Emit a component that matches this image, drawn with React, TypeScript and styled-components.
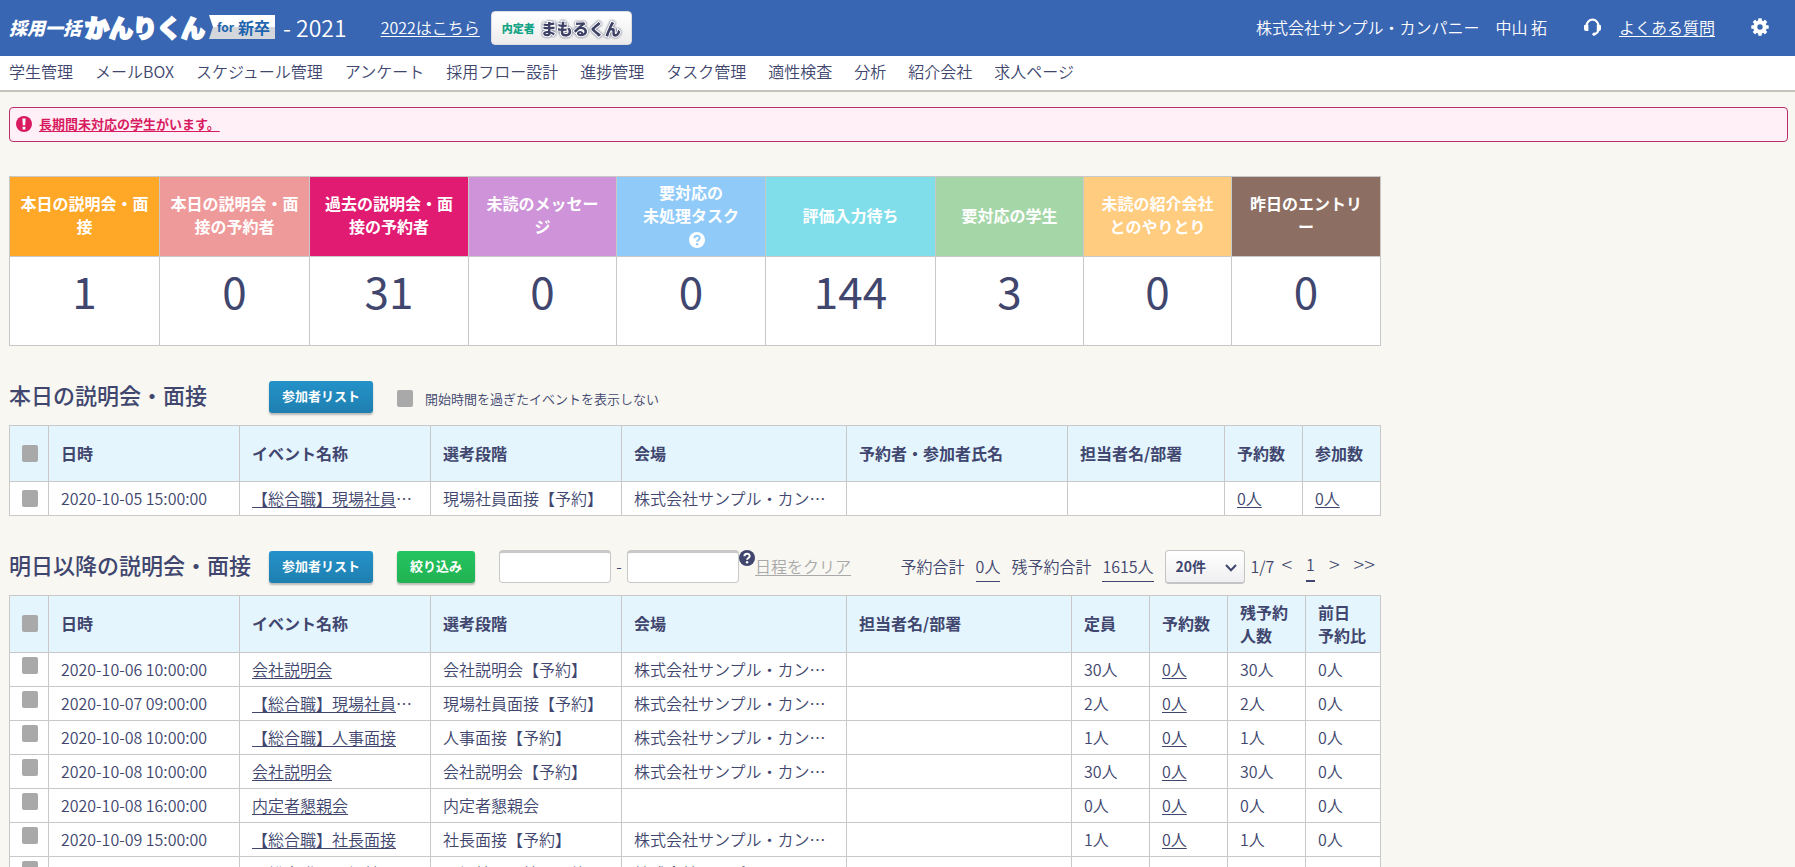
import React from "react";
import styled, { createGlobalStyle } from "styled-components";

const ink = "#40466e";
const line = "#c8c8c8";

const GlobalStyle = createGlobalStyle`
  * { box-sizing: border-box; }
  body {
    margin: 0;
    background: #f8f7f2;
    color: ${ink};
    font-family: "Noto Sans CJK JP", sans-serif;
    font-size: 16px;
    font-weight: 350;
    line-height: 23px;
  }
  a { color: inherit; text-underline-offset: 2px; }
  button, input, select { font-family: inherit; color: inherit; }
`;

const Header = styled.header`
  display: flex;
  align-items: center;
  height: 56px;
  padding: 0 26px 2px 9px;
  background: #3966b3;
  color: #fff;
  white-space: nowrap;
`;
const Logo = styled.div`
  display: flex;
  align-items: center;
  font-weight: 900;
  line-height: 24px;
`;
const LogoSmall = styled.span`
  font-size: 18px;
  font-style: italic;
`;
const LogoLarge = styled.span`
  margin-left: 4px;
  font-size: 24px;
  -webkit-text-stroke: 2px #fff;
`;
const LogoBadge = styled.span`
  display: flex;
  align-items: center;
  gap: 4px;
  height: 24px;
  margin-left: 4px;
  padding: 0 5px 0 8px;
  background: linear-gradient(#fff 50%, #d3d7dc 50%);
  clip-path: polygon(0 0, 100% 0, 100% 100%, 0 100%, 4px 50%);
  color: #1d63ad;
  font-size: 16px;
  font-weight: 700;
  small { font-size: 12px; }
`;
const Year = styled.span`
  margin: 0 34px 0 8px;
  font-size: 23px;
`;
const MamoruButton = styled.button`
  display: flex;
  align-items: center;
  gap: 6px;
  height: 34px;
  margin: 2px 0 0 11px;
  padding: 0 10px;
  border: 1px solid #ddd;
  border-radius: 4px;
  background: linear-gradient(#fff, #ececec);
  font-size: 16px;
  font-weight: 900;
  small { color: #12a484; font-size: 11px; }
  span {
    color: #3d4164;
    -webkit-text-stroke: 2px #fff;
    paint-order: stroke fill;
    filter: drop-shadow(0 0 1px #3d4164);
  }
`;
const HeaderRight = styled.div`
  display: flex;
  align-items: center;
  margin-left: auto;
  svg { display: block; }
`;
const UserName = styled.span`
  margin: 0 37px 0 16px;
`;
const FaqLink = styled.a`
  margin: 0 36px 0 18px;
`;

const Nav = styled.nav`
  display: flex;
  flex-wrap: wrap;
  gap: 0 22px;
  padding: 4px 9px 7px;
  border-bottom: 2px solid #c4c3b8;
  background: #fff;
  a { text-decoration: none; }
`;

const Main = styled.main`
  padding: 15px 7px 0 9px;
`;
const Alert = styled.div`
  display: flex;
  align-items: center;
  gap: 7px;
  height: 35px;
  padding: 0 6px 2px;
  border: 1px solid #b92f6c;
  border-radius: 4px;
  background: #fff0f8;
  color: #d81b60;
  font-size: 13px;
  font-weight: 700;
`;
const Content = styled.div`
  width: 77%;
  min-width: 1372px;
`;

const StatTable = styled.table`
  width: 100%;
  margin-top: 34px;
  border-collapse: collapse;
  table-layout: fixed;
  background: #fff;
  th, td { border: 1px solid ${line}; padding: 0; text-align: center; white-space: nowrap; }
  td { height: 89px; padding-bottom: 22px; font-size: 44px; font-weight: 400; line-height: 50px; }
`;
const StatHead = styled.th<{ $color: string }>`
  && { height: 80px; padding-bottom: 3px; }
  background: ${(p) => p.$color};
  color: #fff;
  font-weight: 700;
  svg { margin-left: 12px; vertical-align: -3px; }
`;

const Bar = styled.div`
  display: flex;
  align-items: center;
  height: 33px;
  margin: 34px 0 12px;
  white-space: nowrap;
`;
const Title = styled.h2`
  width: 260px;
  margin: 0;
  padding-bottom: 5px;
  font-size: 22px;
  font-weight: 500;
  line-height: 32px;
`;
const ActionButton = styled.button<{ $green?: boolean }>`
  height: 32px;
  margin-right: 24px;
  padding: 0 13px 2px;
  border: 0;
  border-radius: 3px;
  background: ${(p) => (p.$green ? "linear-gradient(#23c560, #22b152)" : "linear-gradient(#2492c9, #1f7fb0)")};
  box-shadow: 0 2px 2px rgba(0, 0, 0, 0.25);
  color: #fff;
  font-size: 13px;
  font-weight: 700;
`;
const Check = styled.input.attrs({ type: "checkbox" })`
  appearance: none;
  display: block;
  width: 16px;
  height: 17px;
  margin: 0;
  border-radius: 2px;
  background: #a9a9a9;
`;
const HideLabel = styled.label`
  display: flex;
  align-items: center;
  gap: 12px;
  padding-top: 3px;
  font-size: 13px;
`;
const DateInput = styled.input`
  width: 112px;
  height: 33px;
  border: 1px solid ${line};
  border-top-width: 3px;
  border-radius: 4px;
  background: #fff;
`;
const Dash = styled.span`
  width: 16px;
  text-align: center;
`;
const HelpMark = styled.span`
  align-self: flex-start;
  svg { display: block; }
`;
const ClearLink = styled.a`
  color: #a9a9a9;
`;
const Pager = styled.div`
  display: flex;
  align-items: center;
  margin-left: auto;
  padding-right: 6px;
`;
const Total = styled.span`
  margin: 0 11px;
  border-bottom: 1px solid ${ink};
  line-height: 30px;
`;
const SelectBox = styled.span`
  position: relative;
  margin-right: 6px;
  svg { position: absolute; right: 8px; top: 14px; pointer-events: none; }
`;
const CountSelect = styled.select`
  appearance: none;
  display: block;
  width: 80px;
  height: 34px;
  padding: 0 10px;
  border: 1px solid #c4c4c4;
  border-bottom-width: 2px;
  border-radius: 4px;
  background: linear-gradient(#fff, #f0f0f2);
  font-size: 14px;
  font-weight: 700;
`;
const Pages = styled.span`
  display: flex;
  gap: 14px;
  margin-left: 7px;
  line-height: 24px;
  a { font-size: 20px; font-weight: 300; text-decoration: none; }
`;
const CurrentPage = styled.b`
  padding-bottom: 4px;
  border-bottom: 2px solid ${ink};
  font-weight: 350;
`;

const Grid = styled.table<{ $headHeight: number; $high?: boolean }>`
  width: 100%;
  border-collapse: collapse;
  table-layout: fixed;
  background: #fff;
  th, td {
    padding: 0 12px 1px;
    border: 1px solid ${line};
    text-align: left;
    white-space: nowrap;
  }
  th { height: ${(p) => p.$headHeight}px; background: #e4f5fe; font-weight: 700; }
  td { height: 34px; }
  td:first-child { padding-bottom: ${(p) => (p.$high ? 8 : 1)}px; }
`;

function HelpIcon({ fill, mark }: { fill: string; mark: string }) {
  return (
    <svg width="16" height="16" viewBox="0 0 16 16" aria-hidden="true">
      <circle cx="8" cy="8" r="8" fill={fill} />
      <path d="M5.4 6.2C5.4 2.9 10.7 2.9 10.7 6.1C10.7 8 8.1 7.9 8.1 9.8" fill="none" stroke={mark} strokeWidth="2" />
      <circle cx="8.1" cy="12.2" r="1.2" fill={mark} />
    </svg>
  );
}

const navItems = ["学生管理", "メールBOX", "スケジュール管理", "アンケート", "採用フロー設計", "進捗管理", "タスク管理", "適性検査", "分析", "紹介会社", "求人ページ"];

const stats: { lines: string[]; color: string; value: number; width: number; help?: boolean }[] = [
  { lines: ["本日の説明会・面", "接"], color: "#ffa726", value: 1, width: 150 },
  { lines: ["本日の説明会・面", "接の予約者"], color: "#ef9a9a", value: 0, width: 150 },
  { lines: ["過去の説明会・面", "接の予約者"], color: "#e21b72", value: 31, width: 159 },
  { lines: ["未読のメッセー", "ジ"], color: "#ce93d8", value: 0, width: 148 },
  { lines: ["要対応の", "未処理タスク"], color: "#90caf9", value: 0, width: 149, help: true },
  { lines: ["評価入力待ち"], color: "#80deea", value: 144, width: 170 },
  { lines: ["要対応の学生"], color: "#a5d6a7", value: 3, width: 148 },
  { lines: ["未読の紹介会社", "とのやりとり"], color: "#ffcc80", value: 0, width: 148 },
  { lines: ["昨日のエントリ", "ー"], color: "#8d6e63", value: 0, width: 149 },
];

const todayCols = [39, 191, 191, 191, 225, 221, 157, 78, 78];
const laterCols = [39, 191, 191, 191, 225, 225, 78, 78, 78, 75];

/* Shortens a text to the given number of characters. */
const shorten = (text: string, max: number) => (text.length > max ? [text.slice(0, max), "…"] : [text, ""]);

const venue = shorten("株式会社サンプル・カンパニー", 11).join("");
const laterRows = [
  ["2020-10-06 10:00:00", "会社説明会", "会社説明会【予約】", venue, "30人"],
  ["2020-10-07 09:00:00", "【総合職】現場社員面接", "現場社員面接【予約】", venue, "2人"],
  ["2020-10-08 10:00:00", "【総合職】人事面接", "人事面接【予約】", venue, "1人"],
  ["2020-10-08 10:00:00", "会社説明会", "会社説明会【予約】", venue, "30人"],
  ["2020-10-08 16:00:00", "内定者懇親会", "内定者懇親会", "", "0人"],
  ["2020-10-09 15:00:00", "【総合職】社長面接", "社長面接【予約】", venue, "1人"],
  ["2020-10-12 15:00:00", "【総合職】現場社員面接", "現場社員面接【予約】", venue, "1人"],
];

function EventLink({ name }: { name: string }) {
  const [text, rest] = shorten(name, 9);
  return <><a href="#event">{text}</a>{rest}</>;
}

function Columns({ widths }: { widths: number[] }) {
  const total = widths.reduce((a, b) => a + b, 0);
  return (
    <colgroup>
      {widths.map((w, i) => (
        <col key={i} style={{ width: `${(w / total) * 100}%` }} />
      ))}
    </colgroup>
  );
}

export default function App() {
  return (
    <>
      <GlobalStyle />
      <Header>
        <Logo>
          <LogoSmall>採用一括</LogoSmall>
          <LogoLarge>かんりくん</LogoLarge>
          <LogoBadge><small>for</small>新卒</LogoBadge>
        </Logo>
        <Year>- 2021</Year>
        <a href="#2022">2022はこちら</a>
        <MamoruButton type="button"><small>内定者</small><span>まもるくん</span></MamoruButton>
        <HeaderRight>
          <span>株式会社サンプル・カンパニー</span>
          <UserName>中山 拓</UserName>
          <svg width="17" height="18" viewBox="0 0 17 18" aria-hidden="true">
            <path d="M2.6 9V7.6a5.9 5.9 0 0 1 11.8 0V11q0 4-4 5.3" fill="none" stroke="#fff" strokeWidth="2.2" />
            <path d="M0 8.2q0-1.4 1.4-1.4H4.4V13H2Q0 13 0 11zM17 8.2q0-1.4-1.4-1.4H12.8V13H15Q17 13 17 11z" fill="#fff" />
            <circle cx="10" cy="16.2" r="1.6" fill="#fff" />
          </svg>
          <FaqLink href="#faq">よくある質問</FaqLink>
          <svg width="18" height="18" viewBox="0 0 18 18" aria-hidden="true">
            <circle cx="9" cy="9" r="4.7" fill="none" stroke="#fff" strokeWidth="4" />
            <g fill="#fff">
              {[0, 45, 90, 135, 180, 225, 270, 315].map((a) => (
                <rect key={a} x="7.2" y="0.3" width="3.6" height="4" rx="0.6" transform={`rotate(${a} 9 9)`} />
              ))}
            </g>
          </svg>
        </HeaderRight>
      </Header>
      <Nav>
        {navItems.map((n) => <a key={n} href="#nav">{n}</a>)}
      </Nav>
      <Main>
        <Alert>
          <svg width="16" height="16" viewBox="0 0 16 16" aria-hidden="true">
            <circle cx="8" cy="8" r="8" fill="#d81b60" />
            <path d="M6.4 2.5H9.6L9.2 9.3H6.8ZM6.6 10.7H9.4V13.4H6.6Z" fill="#fff" />
          </svg>
          <a href="#alert">長期間未対応の学生がいます。</a>
        </Alert>
        <Content>
          <StatTable>
            <Columns widths={stats.map((s) => s.width)} />
            <thead>
              <tr>
                {stats.map((s, i) => (
                  <StatHead key={i} $color={s.color}>
                    {s.lines.map((l, j) => <React.Fragment key={j}>{j > 0 && <br />}{l}</React.Fragment>)}
                    {s.help && <><br /><HelpIcon fill="#fff" mark="#90caf9" /></>}
                  </StatHead>
                ))}
              </tr>
            </thead>
            <tbody>
              <tr>{stats.map((s, i) => <td key={i}>{s.value}</td>)}</tr>
            </tbody>
          </StatTable>

          <Bar>
            <Title>本日の説明会・面接</Title>
            <ActionButton type="button">参加者リスト</ActionButton>
            <HideLabel><Check />開始時間を過ぎたイベントを表示しない</HideLabel>
          </Bar>
          <Grid $headHeight={56}>
            <Columns widths={todayCols} />
            <thead>
              <tr>
                <th><Check aria-label="すべて選択" /></th>
                {["日時", "イベント名称", "選考段階", "会場", "予約者・参加者氏名", "担当者名/部署", "予約数", "参加数"].map((h) => <th key={h}>{h}</th>)}
              </tr>
            </thead>
            <tbody>
              <tr>
                <td><Check aria-label="選択" /></td>
                <td>2020-10-05 15:00:00</td>
                <td><EventLink name="【総合職】現場社員面接" /></td>
                <td>現場社員面接【予約】</td>
                <td>{venue}</td>
                <td />
                <td />
                <td><a href="#reserve">0人</a></td>
                <td><a href="#join">0人</a></td>
              </tr>
            </tbody>
          </Grid>

          <Bar>
            <Title>明日以降の説明会・面接</Title>
            <ActionButton type="button">参加者リスト</ActionButton>
            <ActionButton type="button" $green>絞り込み</ActionButton>
            <DateInput type="text" aria-label="開始日" />
            <Dash>-</Dash>
            <DateInput type="text" aria-label="終了日" />
            <HelpMark><HelpIcon fill={ink} mark="#fff" /></HelpMark>
            <ClearLink href="#clear">日程をクリア</ClearLink>
            <Pager>
              予約合計<Total>0人</Total>残予約合計<Total>1615人</Total>
              <SelectBox>
                <CountSelect aria-label="表示件数"><option>20件</option></CountSelect>
                <svg width="12" height="8" viewBox="0 0 12 8" aria-hidden="true">
                  <path d="M1 1L6 6.2L11 1" fill="none" stroke={ink} strokeWidth="2" />
                </svg>
              </SelectBox>
              1/7
              <Pages>
                <a href="#prev">&lt;</a>
                <CurrentPage>1</CurrentPage>
                <a href="#next">&gt;</a>
                <a href="#last">&gt;&gt;</a>
              </Pages>
            </Pager>
          </Bar>
          <Grid $headHeight={57} $high>
            <Columns widths={laterCols} />
            <thead>
              <tr>
                <th><Check aria-label="すべて選択" /></th>
                {["日時", "イベント名称", "選考段階", "会場", "担当者名/部署", "定員", "予約数"].map((h) => <th key={h}>{h}</th>)}
                <th>残予約<br />人数</th>
                <th>前日<br />予約比</th>
              </tr>
            </thead>
            <tbody>
              {laterRows.map(([date, name, stage, place, seats], i) => (
                <tr key={i}>
                  <td><Check aria-label="選択" /></td>
                  <td>{date}</td>
                  <td><EventLink name={name} /></td>
                  <td>{stage}</td>
                  <td>{place}</td>
                  <td />
                  <td>{seats}</td>
                  <td><a href="#reserve">0人</a></td>
                  <td>{seats}</td>
                  <td>0人</td>
                </tr>
              ))}
            </tbody>
          </Grid>
        </Content>
      </Main>
    </>
  );
}
